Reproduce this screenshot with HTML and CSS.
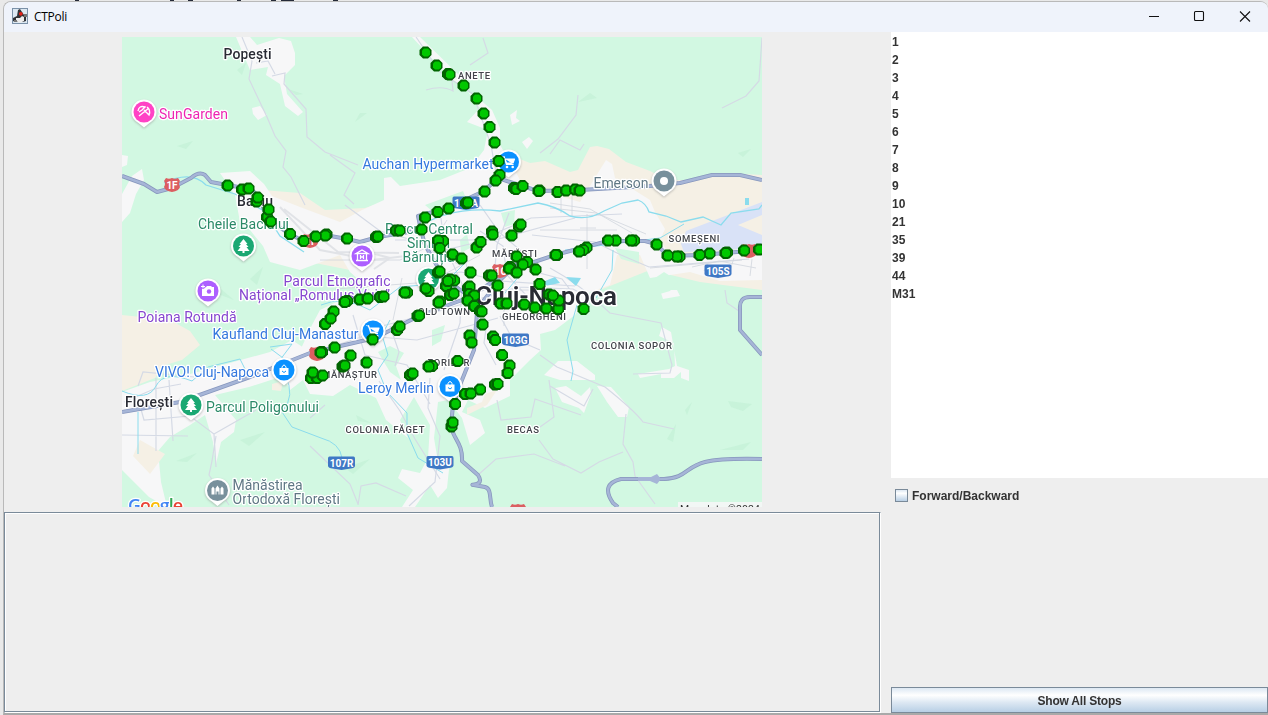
FILE: index.html
```html
<!DOCTYPE html>
<html lang="ro">
<head>
<meta charset="utf-8">
<title>CTPoli</title>
<link rel="stylesheet" href="styles.css">
</head>
<body>
<div class="backdrop"><i class="b1"></i><i class="b2"></i><i class="b3"></i><i class="b4"></i><i class="b5"></i><i class="b6"></i><i class="b7"></i></div>
<div class="window">
  <header class="titlebar">
    <svg class="app-icon" viewBox="0 0 16 16"><rect x=".5" y=".5" width="15" height="15" fill="#dce8f2" stroke="#7b91a8"/><path d="M1 10l4-2 1-6 2-1 2 3 2 3 2 1v5l-3 1H3l-2-1z" fill="#303236"/><path d="M4 10l4 0 2-2 2 1v4l-4 2-4-2z" fill="#ededed"/><path d="M2 12h3v2H2zM12 6h3v3h-3z" fill="#777"/><circle cx="8.800" cy="5.800" r="1.900" fill="#e32219"/></svg>
    <span class="title">CTPoli</span>
    <svg class="controls" viewBox="0 0 136 29"><g fill="none" stroke="#111" stroke-width="1.100"><path d="M17 14.500h10"/><rect x="62.500" y="9.500" width="9" height="9" rx="1"/><path d="M108 9.500l10 10M118 9.500l-10 10"/></g></svg>
  </header>
  <div class="content">
    <main class="left">
      <div class="map-area">
      <svg class="map" viewBox="122 37 640 470">
        <defs>
          <marker id="stop" markerUnits="userSpaceOnUse" markerWidth="14" markerHeight="14" refX="7" refY="7"><path d="M4.500 1h5l3.500 3.500v5l-3.500 3.500h-5L1 9.500v-5z" fill="#006400"/><path d="M5.500 3h4l2 2v4l-2 2h-4L3.500 9V5z" fill="#00c800"/></marker>
          <path id="pin" d="M0-12.500C7-12.500 12.500-7 12.500 0c0 5-3 8.500-7 11L0 15.500-5.500 11c-4-2.500-7-6-7-11C-12.500-7-7-12.500 0-12.500z"/>
          <path id="tree" d="M0-7l4 5H2.500L5 1H3l3 4H1v2h-2V5h-5l3-4h-2l2.500-3H-4z" fill="#fff"/>
          <g id="cart"><path d="M-7-5.500h2.500L-2 2.500h7M-3.500-3H6L4.500 1H-2z" fill="#fff" stroke="#fff" stroke-width="1.200" stroke-linejoin="round"/><path d="M-7-5.500h2.500L-6-4z" fill="#0b91ff"/><circle cx="-1.500" cy="5" r="1.300" fill="#fff"/><circle cx="4.200" cy="5" r="1.300" fill="#fff"/></g>
          <path id="shield" d="M-12-6.500H12q1.500 0 1.500 2V3Q13 5 9 5.500L0 7-9 5.500Q-13 5-13.500 3V-4.500q0-2 1.500-2z" fill="#3f78c5"/>
          <path id="nshield" d="M-6-7q3 1.500 6 0 3 1.500 6 0l2 3q-2 2 0 6-1 4-8 5-7-1-8-5 2-4 0-6z" fill="#db5e61"/>
        </defs>
        <rect x="122" y="37" width="640" height="470" fill="#d2f8e2"/>
        <g fill="#f5f0e5">
          <path d="M262 190L300 193 325 210 365 208 398 197 440 190 512 156 530 163 545 161 570 172 578 170 590 147 597 146 609 149 626 162 650 171 668 180 700 180 725 173 762 175V290L700 282 650 270 600 290 500 300 300 260z"/>
          <path d="M122 315L170 320 190 331 200 345 182 360 165 365 155 378 122 391z"/>
        </g>
        <g fill="#f7f7f8">
          <path d="M220 173L250 171 264 184 272 196 300 207 340 222 362 210 384 200 384 178 391 177 400 186 440 180 470 168 484 150 488 130 467 122 480 108 465 88 450 78 412 37H420L462 78 468 92 478 98 492 110 500 128 500 145 512 165 520 180 545 192 580 202 606 160 612 164 615 178 650 200 655 212 665 229 660 240 672 258 704 253 762 246V280L720 281 690 272 650 278 640 255 617 255 610 285 590 292 575 315 555 330 540 334 541 350 530 360 510 380 510 396 485 408 468 400 462 412 480 420 485 433 470 445 462 418 448 400 438 402 434 438 438 462 450 460 447 488 438 498 430 485 415 507H402L413 490 398 478 402 469 420 473 428 458 430 425 414 397 400 420 408 438 386 420 376 398 350 385 333 396 310 394 303 380 290 390 283 376 298 355 312 325 320 310 345 298 370 290 350 272 340 255 300 270 270 262 263 246 250 230 240 222 235 195z"/>
          <path d="M122 392L150 382 190 374 270 352 292 340 304 348 290 366 274 379 249 387 215 395 236 420 234 432 221 442 216 464 213 442 205 415 190 425 170 437 158 451 161 482 167 507 149 497 122 470z"/>
          <path d="M236 37h14l7 8 22-7 12 3 4 12v12l-11 11 3 18 16 18-5 4-13-10-5-22-14-9 2-8-18 3zM253 114l-1-6 8-2 7 9-9 5zM122 155l6 1-1 9-5 2zM122 194l10-18 10-7 2 11-8 14-6 19-8 9z"/>
          <path d="M544 375l14-14 19 0 18 14 0 5-19 0-16 0zM555 388l11-2 15 10 9-9 1 7-7 19-5-5-17-6zM597 386l14 1 18 20-2 10-9 0-11-15zM659 336l3-9 9 5 6 34 12 4v11l-8-3v-6l-7 6h-13v-4l-21 4-2-4 31-5 6-3-1-23zM660 290h17l3 6-17 3z"/>
          <path d="M510 115l7-5-1 8 4 3-8 4zM522 142l7-5 4 4-6 8z"/>
        </g>
        <g fill="#d2f8e2"><path d="M425 205l38-14 3 7-27 19zM501 213l14-3-1 14-9 3zM460 240l7-6 3 14-9 5zM378 352l12-6 14 7-8 13 5 14-11-8zM432 330l13-5-4 16-9 5zM615 248l24 4v12l-18-5zM640 288l24-16 14 9-8 10-17 5z"/></g>
        <g fill="#f5f0e5"><path d="M467 408l15-6 3-8 12-4-10 15-20 10zM140 440l25 14-15 20-17-18zM272 384l11-3-2 10-9-1z"/></g>
        <path d="M686 231L762 202v13l-24 10 24 10v13l-78 4-3-8z" fill="#d9e2f7"/>
        <g fill="#c0efd4" opacity=".55"><path d="M177 146l16-5-7 8zM237 70l9-7-4 12zM288 89l15 5-7 1zM367 113l-12 9 5-9zM216 285l18 15-16-6zM250 279l13-12-6 18zM176 461l21-8-10 9zM240 440l25-8-16 14zM345 468l25-9-17 15zM356 415l15 8-13-2zM578 102l12-9 7 5zM738 153l13-4-8 8zM728 401l24 3-9 7-12-4zM720 450l31-8-8 8zM667 439l9-15-3 18zM685 410l7-8-5 13z"/></g>
        <g fill="none" stroke="#d5dae5" stroke-width="1.200">
          <path d="M242 37l10 24-3 18 18 38 8 19 11 15-3 16 8 10 14 28M256 63l12-2 7 13M272 76l13-3-1 11 22 25 1 28 18 15 33 13M416 37l24 35 33 22 18 51 6 34M330 155l25 18-11 22 10 9M426 90q16-5 27 1l-2-21M470 65l18-12-5-15M540 153l18-14 18-24 2-20M550 154l10-14 20 10 4-6M762 38l-3 43-13 15-24 12"/>
          <path d="M345 205l35 26 29 8M395 240h100l80-22M407 259l63-15 61-26 91-4M420 277l41-5 39 9 75 5M480 231l23 15 4 29 39 41M509 213l-12 32-5 55M441 218l3 26 18 40-2 39-16 47M480 205l19 27 29 25M532 235l63 7 26 13 28 12 100-8M593 300l-20-11-55-2-75 23-95 25M322 350l42-14 53 4 81-22M353 315l12 40 42 10 23 39M390 326l9 26-4 14M500 316l12 22 28 12M520 253l12 18 30 8 15 20M430 378l-2 30 12 28-5 46-26 24M487 322l-3 21 12 22"/>
          <path d="M124 402l30-13 27-5M156 378v73M169 380l4 61M139 402l5 18 46-4 24 18 2 33M122 435l66 1M214 434l42-24M138 386l5-14 51 5M216 436l-4 25-3 14 20 30M310 418l15-13M440 479l-25-40-15-28-21-30M310 446l40 38 8 20M358 505l3-19 15-3 30 13"/>
          <path d="M550 268q30 16 60 45l51 10 11 42-2 8-37 1M540 355l17 12 48 20q30 24 38 35l31 7M626 414l-3 30 10 18 2 14 20 28M623 452l-24 10-18 11-28-14-14-19M549 380l5 37-14 10M725 290l2 13 12 8M550 386l34 20 9-17M497 400l4 20 30-3 4-18 46 16M478 475l18-16 38-5 31 12"/>
        </g>
        <g fill="none" stroke="#d1d6dd" stroke-width=".8"><path d="M320 260h80l30-14 17-26M550 203l40 6 42 24M550 208l46 5 50 21M572 194v22M561 198v15M587 214v55M580 228h16M540 230h77M650 268l92-8M692 267l27-6 37 7M704 271l4-7M730 270l4-12M750 276l2-17M335 289l95-7 50-27M402 278l-9 42M465 259l7 31M471 290l60 0M504 302v24M430 250l32 16"/><path d="M280 207l40 43 52 10 60-7M284 209l54 43 61 1M360 250l30 8-16 11" stroke-width="2" stroke="#e1e3e7"/></g>
        <g fill="none" stroke="#8bdced" stroke-width="1.300"><path d="M164 183q27-13 42 2l29 9 29 17 16 25 24 16M413 230Q450 205 500 211l38-8q18 3 32 13 18 5 34-5l18-8 16-3q8 3 11 12l17 4 15 6 22-5 18 8 10-12 28-4 3-4"/><path d="M321 305q22-10 49 5l30-23 45-4 20-20M122 391q26 11 34-5t36-5l16-14 32-8 5 10M285 375q11 21-3 37l10 15 29 11q19 5 21 20M390 320l-8 15 6 20-10 15 9 22 20 21 0 20 11 25 25 15M577 305l-10 35 6 31-2 10M520 275l-20 24-32 3M613 250l-1 20-16 28M565 250l95-12 24-14M270 347l22-3-15 20M271 349l20 15M138 412v42" stroke-width="1"/></g>
        <path d="M545 281l10-4 5 6-15 3zM566 277l15 1-5 8zM745 198h4v7h-4z" fill="#8bdced"/>
        <g class="highway">
          <path id="roads" d="M122 176L144 184 157 192 172 188 191 178Q199 171 205 175L211 182 227 185 250 189C262 195 262 211 270 221L290 234 303 241 325 235 347 239 360 242 378 237 421 230 418 216 448 208 484 191 498 178 510 182 538 191 580 190 650 186 680 183 712 175H740L762 180M122 412L180 402 250 377 310 353 375 338 419 316 470 297 510 270 555 255 608 241H645L656 244 668 256 700 255 762 250M421 230L425 245 444 278 470 297 477 313 474 350 460 385 453 405 451 426C453 439 463 443 462 461L478 475C486 487 467 484 474 485L485 487C492 489 489 499 492 507M477 309L499 281 520 261M762 297H750Q739 297 740 309V330L762 355M762 459Q722 458 705 462C685 467 687 478 664 479H621Q600 484 613 503L618 507"/>
          <use href="#roads" stroke="#a6b5d7" stroke-width="2.500"/>
        </g>
        <path d="M638 477h13l6-3 4 5-4 5-7-3h-12z" fill="#a6b5d7"/>

        <g class="shields">
          <use href="#nshield" x="172" y="185"/><text x="172" y="189">1F</text>
          <use href="#nshield" x="310" y="241"/><text x="311" y="245">1F</text>
          <use href="#nshield" x="500" y="271"/><text x="501" y="275">1C</text>
          <use href="#nshield" x="317" y="354"/><use href="#nshield" x="749" y="251"/><use href="#nshield" x="518" y="511"/>
          <use href="#shield" x="466" y="203"/><text x="466" y="207">105A</text>
          <use href="#shield" x="718" y="271"/><text x="718" y="274.500">105S</text>
          <use href="#shield" x="515.500" y="340"/><text x="515.500" y="343.500">103G</text>
          <use href="#shield" x="341.500" y="463"/><text x="341.500" y="466.500">107R</text>
          <use href="#shield" x="440" y="462.500"/><text x="440" y="466">103U</text>
        </g>
        <g class="pins">
          <g transform="translate(144 112)"><use href="#pin"/><circle r="10.500" fill="#ff43c5"/><path d="M-6-1Q-5-7 1-5L-2-2-5 0M3-5Q7-2 5 3L0-2M-5 4L5-4" fill="none" stroke="#fff" stroke-width="1.400"/></g>
          <g transform="translate(243.500 246)"><use href="#pin"/><circle r="10.500" fill="#1ba873"/><use href="#tree"/></g>
          <g transform="translate(191 405)"><use href="#pin"/><circle r="10.500" fill="#1ba873"/><use href="#tree"/></g>
          <g transform="translate(428.500 279)"><use href="#pin"/><circle r="10.500" fill="#1ba873"/><use href="#tree"/></g>
          <g transform="translate(208 291)"><use href="#pin"/><circle r="10.500" fill="#ad5fff"/><path d="M-6-4h4l1-1h4l1 1h2v9H-6z" fill="#fff"/><circle cx="1" cy=".5" r="2.200" fill="#ad5fff"/><path d="M-5-7v5M-7.500-4.500h5" stroke="#ad5fff" stroke-width="2.500"/><path d="M-5-6.500v4M-7-4.500h4" stroke="#fff"/></g>
          <g transform="translate(362 256)"><use href="#pin"/><circle r="10.500" fill="#ad5fff"/><path d="M-6-2.500L0-6 6-2.500zM-4.500-2v6M4.500-2v6M-6 4.500H6M-1.500-1v4M1.500-1v4M-1.500 1h3" fill="none" stroke="#fff" stroke-width="1.300"/></g>
          <g transform="translate(508.500 162)"><use href="#pin"/><circle r="10.500" fill="#0b91ff"/><use href="#cart"/></g>
          <g transform="translate(373 331)"><use href="#pin"/><circle r="10.500" fill="#0b91ff"/><use href="#cart"/></g>
          <g transform="translate(284 370)"><use href="#pin"/><circle r="10.500" fill="#0b91ff"/><path d="M-4.500-2h9v7h-9z" fill="#fff"/><path d="M-2-1v-2q2-4 4 0v2" fill="none" stroke="#fff"/><path d="M-2 1q2 3 4 0" fill="none" stroke="#0b91ff"/></g>
          <g transform="translate(450 386.500)"><use href="#pin"/><circle r="10.500" fill="#0b91ff"/><path d="M-4.500-2h9v7h-9z" fill="#fff"/><path d="M-2-1v-2q2-4 4 0v2" fill="none" stroke="#fff"/><path d="M-2 1q2 3 4 0" fill="none" stroke="#0b91ff"/></g>
          <g transform="translate(664 181)"><use href="#pin"/><circle r="10.500" fill="#78909c"/><circle r="4" fill="#fff"/></g>
          <g transform="translate(217.500 490.500)"><use href="#pin"/><circle r="10.500" fill="#78909c"/><path d="M-6 4v-6l1.500-2L-3-2v6zM-2 4v-6l2-3 2 3v6H1V1h-2v3zM3 4v-6l1.500-2L6-2v6z" fill="#fff"/></g>
        </g>
        <g class="labels">
          <text class="town" x="223.500" y="59" textLength="48">Popești</text>
          <text class="town" x="237" y="206" textLength="36">Baciu</text>
          <text class="town" x="125" y="407" textLength="48">Florești</text>
          <text class="pink" x="159" y="119" textLength="69">SunGarden</text>
          <text class="blue" x="362.500" y="168.500" textLength="131">Auchan Hypermarket</text>
          <text class="slate" x="593.500" y="188" textLength="55">Emerson</text>
          <text class="green" x="198" y="229" textLength="91">Cheile Baciului</text>
          <text class="green" x="385" y="234" textLength="88">Parcul Central</text>
          <text class="green" x="407" y="248" textLength="43">Simion</text>
          <text class="green" x="402.500" y="262" textLength="52">Bărnuția</text>
          <text class="purple" x="283.500" y="286" textLength="107">Parcul Etnografic</text>
          <text class="purple" x="239" y="300" textLength="151">Național „Romulus Vuia”</text>
          <text class="purple" x="137.500" y="322" textLength="99">Poiana Rotundă</text>
          <text class="blue" x="212.500" y="338.500" textLength="146">Kaufland Cluj-Manastur</text>
          <text class="blue" x="155" y="377" textLength="114">VIVO! Cluj-Napoca</text>
          <text class="blue" x="358" y="393" textLength="76">Leroy Merlin</text>
          <text class="green" x="206" y="412" textLength="113">Parcul Poligonului</text>
          <text class="slate" x="232.500" y="490" textLength="70">Mănăstirea</text>
          <text class="slate" x="232.500" y="504" textLength="107.500">Ortodoxă Florești</text>
          <text class="area" x="458" y="79" textLength="32">ANETE</text>
          <text class="area" x="668.500" y="241.500" textLength="51">SOMEȘENI</text>
          <text class="area" x="492" y="256.500" textLength="45">MĂRĂȘTI</text>
          <text class="area" x="502" y="320" textLength="64">GHEORGHENI</text>
          <text class="area" x="418" y="315" textLength="52">OLD TOWN</text>
          <text class="area" x="427.500" y="366" textLength="42">ZORILOR</text>
          <text class="area" x="322" y="377.500" textLength="55">MĂNĂȘTUR</text>
          <text class="area" x="345.500" y="433" textLength="79">COLONIA FĂGET</text>
          <text class="area" x="507" y="433" textLength="32">BECAS</text>
          <text class="area" x="591" y="348.500" textLength="81">COLONIA SOPOR</text>
          <text class="city" x="475" y="305" textLength="142">Cluj-Napoca</text>
          <text class="google" x="128" y="512" textLength="55"><tspan fill="#4285f4">G</tspan><tspan fill="#ea4335">o</tspan><tspan fill="#fbbc05">o</tspan><tspan fill="#4285f4">g</tspan><tspan fill="#34a853">l</tspan><tspan fill="#ea4335">e</tspan></text>
        </g>
        <rect x="678" y="502" width="84" height="5" fill="#f2f7f5"/><text class="copyright" x="680" y="513" textLength="80">Map data ©2024</text>
        <polyline class="stops" points="425.500,52.500 436.500,65.500 448,74 449.500,74.500 463.500,85.500 476.500,98.500 483.500,113.500 489.500,127 494.500,142.500 498.500,161 499.500,175 495.500,180.500 484.500,191.500 466,203 467.500,202.500 448.500,208.500 437.500,212 425,217.500 421.500,229.500 396,230.500 399.500,230.500 376,237 377.500,236.500 347,238.500 326.500,234.500 325,235.500 315.500,236.500 303.500,241 290,234 267,217 270.500,221.500 268.500,209.500 256.500,201.500 257.500,197.500 242,189.500 248.500,188.500 227.500,185.500 514,188 516,189 522.500,186 539.500,190.500 538.500,191 557.500,192 566,190.500 575,189.500 579.500,190.500"/>
        <polyline class="stops" points="519,226.500 520.500,224.500 511.500,235.500 492,231.500 492.500,234.500 476.500,247.500 480.500,242 443,241 438,240.500 439.500,248 452.500,254.500 461.500,258.500 438,272.500 439.500,271.500 454,280.500 450,279.500 446,286 447.500,281 450,295 453.500,293.500 440,301.500 438.500,302.500 428.500,291 425.500,288.500 407,292.500 404.500,292.500 380,297 383.500,296.500 359.500,299.500 367.500,298.500 347,301 344.500,302 333.500,311.500 325,324 330.500,318.500 417.500,316 419,315.500 397,330 399.500,326.500 372.500,339.500 334.500,347.500 322,352 320.500,352.500 311,378 317,378 312.500,372.500 322.500,375.500 342.500,366.500 344.500,365.500 350.500,355.500 366.500,362.500 410,375 412.500,373.500 432,366 428.500,366.500 457.500,361"/>
        <polyline class="stops" points="759,249.500 744,250.500 727,252.500 725.500,253 709.500,253.500 699.500,255 679.500,256.500 676.500,256.500 667.500,255.500 656.500,244.500 634,240.500 631,240.500 615.500,240.500 608,240.500 586.500,247.500 583,250 579,251.500 557,255 555.500,255 516.500,256.500 527,262 522.500,264.500 510,267 509,268.500 516.500,272.500 535.500,269.500 489,275.500 491.500,275.500 470.500,272.500 497.500,285.500 468,288 469.500,286.500 469,294 474,295.500 467.500,300.500 474,306 480,311 481.500,311.500 482.500,324.500 500.500,303.500 506.500,303.500 524,304.500 534.500,307.500 546,308.500 558,309 558.500,300.500 549,294.500 552.500,295.500 539.500,284 583.500,309 469.500,335.500 471.500,342.500 493,336.500 495,340 502,355 509.500,365.500 507.500,373 495,384.500 497.500,384 480,389.500 465,394 470.500,393.500 455,404 451.500,426.500 452.500,422.500"/>
      </svg>
      </div>
      <div class="details"></div>
    </main>
    <aside class="right">
      <ul class="lines"><li>1</li><li>2</li><li>3</li><li>4</li><li>5</li><li>6</li><li>7</li><li>8</li><li>9</li><li>10</li><li>21</li><li>35</li><li>39</li><li>44</li><li>M31</li></ul>
      <label class="direction"><span class="box"></span>Forward/Backward</label>
      <button class="show">Show All Stops</button>
    </aside>
  </div>
</div>
</body>
</html>
```
FILE: styles.css
```css
* { box-sizing: border-box; }
body { margin: 0; width: 1268px; height: 715px; overflow: hidden; background: #e9e9e9; font-family: "Liberation Sans", Arial, sans-serif; display: grid; grid-template-rows: 1px 714px; }
.backdrop { position: relative; background: #e9e9e9; }
.backdrop i { position: absolute; top: 0; height: 1px; width: 4px; background: #252a38; }
.backdrop .b1 { left: 75px; }
.backdrop .b2 { left: 170px; }
.backdrop .b3 { left: 188px; width: 5px; }
.backdrop .b4 { left: 237px; }
.backdrop .b5 { left: 271px; width: 5px; }
.backdrop .b6 { left: 281px; width: 13px; }
.backdrop .b7 { left: 333px; width: 5px; }
.window { margin-left: 3px; border-top: 1px solid #b9b9b9; border-left: 1px solid #b9b9b9; border-bottom: 2px solid #a9a9a9; border-radius: 8px 8px 0 0; overflow: hidden; background: #eee; display: grid; grid-template-rows: 30px 1fr; }
.titlebar { background: #eff3fb; display: flex; align-items: center; padding-left: 8px; }
.app-icon { width: 16px; height: 16px; margin-top: -2px; }
.title { font: 12px "Open Sans", sans-serif; color: #000; margin: -2px 0 0 6px; letter-spacing: -.3px; flex: 1; }
.controls { width: 136px; height: 29px; margin-top: -1px; }
.content { display: grid; grid-template-columns: 877px 377px; column-gap: 10px; }
.left { display: grid; grid-template-rows: 480px 201px; }
.map-area { padding: 5px 0 5px 118px; }
.map { display: block; width: 640px; height: 470px; }
.details { width: 877px; border: 1px solid #7a8a99; border-right-color: #fff; border-bottom-color: #fff; box-shadow: inset -1px -1px #7a8a99, inset 1px 1px #fff; }
.right { display: flex; flex-direction: column; }
.lines { list-style: none; margin: 0; padding: 1px; height: 446px; background: #fff; color: #333; font-size: 12px; font-weight: bold; line-height: 18px; }
.direction { display: flex; align-items: center; height: 35px; padding-left: 4px; color: #333; font-size: 12px; font-weight: bold; }
.box { width: 13px; height: 13px; border: 1px solid #7a8a99; background: linear-gradient(#dde8f3, #fff 30%, #b8cfe5); margin-right: 4px; }
.show { margin-top: auto; height: 26px; border: 1px solid #7a8a99; border-radius: 0; color: #333; font: bold 12px "Liberation Sans", Arial, sans-serif; letter-spacing: -.2px; background: linear-gradient(#dde8f3, #fff 30%, #dde8f3 60%, #b8cfe5); padding: 2px 0 0; }
.highway { fill: none; stroke: #8797bd; stroke-width: 4; stroke-linejoin: round; }
.pins { filter: drop-shadow(0 1px 1px #8888); }
.pins > g > use:first-child { fill: #fff; }
.labels { font-family: Roboto, sans-serif; font-size: 14px; }
.labels text { stroke: #fff; stroke-width: 2.5px; stroke-linejoin: round; paint-order: stroke; }
.labels .town { font-weight: 500; fill: #292b34; }
.labels .city { font-size: 26px; font-weight: 600; fill: #292b34; stroke-width: 3px; }
.labels .area { font-size: 9.5px; font-weight: 500; fill: #42454b; }
.blue { fill: #3478de; }
.green { fill: #2b8a68; }
.purple { fill: #8547cf; }
.pink { fill: #ed25b2; }
.slate { fill: #607885; }
.labels .google { font-family: "Open Sans", sans-serif; font-size: 18px; font-weight: 600; }
.shields { font: bold 10px Roboto, sans-serif; fill: #fff; text-anchor: middle; }
.copyright { font: 10.5px Roboto, sans-serif; fill: #333; }
.stops { fill: none; stroke: none; marker: url(#stop); shape-rendering: crispEdges; }
```
